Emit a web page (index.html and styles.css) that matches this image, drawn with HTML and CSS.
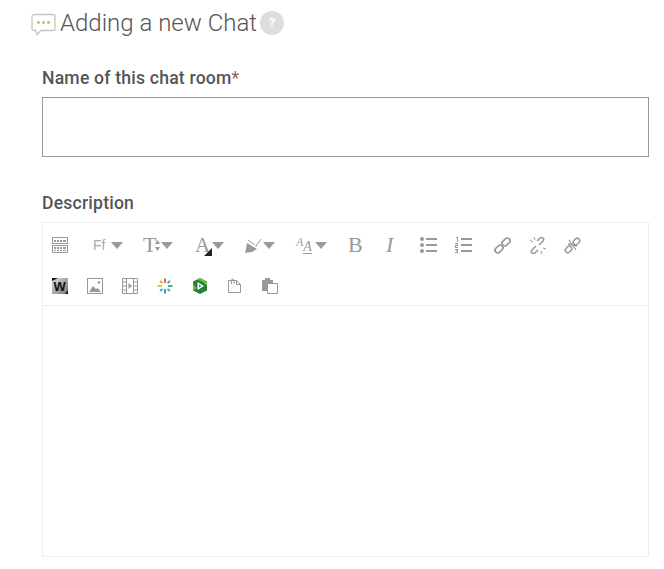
FILE: index.html
```html
<!DOCTYPE html>
<html lang="en">
<head>
<meta charset="utf-8">
<title>Adding a new Chat</title>
<link rel="stylesheet" href="styles.css">
</head>
<body>
<h2 class="heading">
  <svg class="chat-icon" width="26" height="24" viewBox="0 0 26 24"><path d="M4 2.500h19a2 2 0 0 1 2 2v12a2 2 0 0 1-2 2H11l-4 4-1.500-4H4a2 2 0 0 1-2-2v-12a2 2 0 0 1 2-2z" fill="#fff" stroke="#c4c4c4" stroke-width="1.300"/><circle cx="8.500" cy="10.500" r="1.300" fill="#8cc63f"/><circle cx="13.500" cy="10.500" r="1.300" fill="#8cc63f"/><circle cx="18.500" cy="10.500" r="1.300" fill="#8cc63f"/></svg>
  <span class="heading-text">Adding a new Chat</span>
  <span class="help">?</span>
</h2>
<form class="form">
  <label class="label label-name">Name of this chat room<span class="req">*</span></label>
  <input class="name-input" type="text">
  <label class="label label-desc">Description</label>
  <div class="editor">
    <div class="toolbar">
      <div class="row">
        <span class="tool t-first"><svg width="17" height="16" viewBox="0 0 17 16"><g fill="none" stroke="#999"><rect x=".5" y=".5" width="15" height="6"/><rect x=".5" y="8.500" width="15" height="7"/></g><path d="M2 3h2v2H2zM5 3h2v2H5zM8 3h2v2H8zM11 3h3v2h-3zM2 10h2v2H2zM5 10h2v2H5zM8 10h2v2H8zM11 10h3v2h-3zM2 13h2v1H2zM5 13h2v1H5zM8 13h2v1H8zM11 13h3v1h-3z" fill="#999"/></svg></span>
        <span class="tool t-font"><span class="ff">Ff</span><i class="caret"></i></span>
        <span class="tool t-size"><span class="tt">T</span><svg width="5" height="11" viewBox="0 0 5 11"><path d="M2.500 0l2.500 4H0zM2.500 11L0 7h5z" fill="#999"/></svg><i class="caret"></i></span>
        <span class="tool t-color"><span class="ca">A<svg class="corner" width="8" height="8" viewBox="0 0 8 8"><path d="M8 0v8H0z" fill="#222"/></svg></span><i class="caret"></i></span>
        <span class="tool t-hl"><svg width="17" height="17" viewBox="0 0 17 17"><path d="M2 6l10 6-5 3-7 1 1-4z" fill="#999"/><path d="M3 3l7 5M10.500 10L16 2" stroke="#999" fill="none"/></svg><i class="caret"></i></span>
        <span class="tool t-aa"><span class="aa"><span class="a1">A</span><span class="a2">A</span></span><i class="caret"></i></span>
        <span class="tool t-b">B</span>
        <span class="tool t-i">I</span>
        <span class="tool t-ul"><svg width="17" height="16" viewBox="0 0 17 16"><g fill="#999"><circle cx="2" cy="2" r="2"/><circle cx="2" cy="8" r="2"/><circle cx="2" cy="14" r="2"/><path d="M6 1h11v2H6zM6 7h11v2H6zM6 13h11v2H6z"/></g></svg></span>
        <span class="tool t-ol"><svg width="17" height="16" viewBox="0 0 17 16"><g fill="#999"><path d="M6 1h11v2H6zM6 7h11v2H6zM6 13h11v2H6zM1 0h2v5H2V1H1zM0 6h3v3H1v1h2v1H0V8h2V7H0zM0 12h3v4H0v-1h2v-1H1v-1h1v-0H0z"/></g></svg></span>
        <span class="tool t-link"><svg width="17" height="17" viewBox="0 0 17 17"><g fill="none" stroke="#999" stroke-width="1.700"><rect x="-4.500" y="-2.700" width="9" height="5.400" rx="2.700" transform="translate(5 12) rotate(-45)"/><rect x="-4.500" y="-2.700" width="9" height="5.400" rx="2.700" transform="translate(12 5) rotate(-45)"/></g></svg></span>
        <span class="tool t-unlink"><svg width="17" height="17" viewBox="0 0 17 17"><g fill="none" stroke="#999" stroke-width="1.600"><path d="M7 9l-4 4a2 2 0 0 0 3 3l3-3"/><path d="M10 8l4-4a2 2 0 0 0-3-3l-3 3"/></g><path d="M1 3l3 2M5 0l1 3M12 14l1 3M14 11l3 1" stroke="#999" fill="none"/></svg></span>
        <span class="tool t-unlink2"><svg width="17" height="17" viewBox="0 0 17 17"><g fill="none" stroke="#999" stroke-width="1.500"><rect x="-3.500" y="-2.500" width="7" height="5" rx="2.500" transform="translate(4.500 12.500) rotate(-45)"/><rect x="-3.500" y="-2.500" width="7" height="5" rx="2.500" transform="translate(12.500 4.500) rotate(-45)"/></g><path d="M5 3l7 10M13 9L4 7" stroke="#999" stroke-width="1.300" fill="none"/></svg></span>
      </div>
      <div class="row row-2">
        <span class="tool2"><svg width="16" height="16" viewBox="0 0 16 16"><defs><linearGradient id="w" x1="0" y1="0" x2="1" y2="1"><stop offset="0" stop-color="#ddd"/><stop offset="1" stop-color="#777"/></linearGradient></defs><rect width="16" height="16" fill="url(#w)"/><path d="M0 0h6L0 3zM16 16h-3l3-4z" fill="#111"/><text x="1.500" y="13" class="wtxt">W</text></svg></span>
        <span class="tool2"><svg width="16" height="16" viewBox="0 0 16 16"><rect x=".5" y=".5" width="15" height="15" fill="none" stroke="#999"/><path d="M2 14l4-6 3 3 2-1 3 4z" fill="#999"/><circle cx="12" cy="4.500" r="1.300" fill="#999"/></svg></span>
        <span class="tool2"><svg width="16" height="16" viewBox="0 0 16 16"><path d="M.5.500h15v15H.5zM4.500.500v15M11.500.500v15M.5 4h4M.5 8h4M.5 12h4M11.500 4h4M11.500 8h4M11.500 12h4" fill="none" stroke="#999"/><path d="M6.500 5l3.500 3-3.500 3z" fill="#999"/></svg></span>
        <span class="tool2"><svg width="16" height="16" viewBox="0 0 16 16" stroke-width="1.800" fill="none"><path d="M8 .500v4.500" stroke="#d9534f"/><path d="M8 11v4.500" stroke="#3b7fc4"/><path d="M.5 8h4.500" stroke="#d7c13a"/><path d="M11 8h4.500" stroke="#35a56b"/><path d="M3 3l2.500 2" stroke="#e0a030"/><path d="M13 3l-2.500 2" stroke="#35a56b"/><path d="M3 13l2.500-2" stroke="#3aa7d9"/><path d="M13 13l-2.500-2" stroke="#3aa7d9"/></svg></span>
        <span class="tool2"><svg width="16" height="16" viewBox="0 0 16 16"><path d="M8 0l7 3.500v9L8 16l-7-3.500v-9z" fill="#2a7f38"/><path d="M5 1.500L8 0l7 3.500V8L11 4zM1 12.500V6l3.500 4z" fill="#7ab648"/><path d="M5.500 4l6.500 4-6.500 4z" fill="#fff"/><path d="M7 6.500l2.500 1.500L7 9.500z" fill="#2a7f38"/></svg></span>
        <span class="tool2"><svg width="16" height="16" viewBox="0 0 16 16"><path d="M1.500 2.500h8l4 4v8h-12zM9.500 2.500v4h4" fill="#fff" stroke="#999"/><path d="M4.500 6V2a1.300 1.300 0 0 1 2.500 0v4" fill="none" stroke="#999"/></svg></span>
        <span class="tool2"><svg width="16" height="16" viewBox="0 0 16 16"><path d="M0 2h3V0h5v2h3v11H0z" fill="#999"/><path d="M5.500 5.500h10v10h-10z" fill="#fff" stroke="#999"/></svg></span>
      </div>
    </div>
    <div class="area"></div>
  </div>
</form>
</body>
</html>
```
FILE: styles.css
```css
* { box-sizing: border-box; }
html, body { margin: 0; background: #fff; }
body {
  width: 664px;
  height: 569px;
  overflow: hidden;
  font-family: Roboto, "Liberation Sans", sans-serif;
  color: #555;
}
.heading {
  display: flex;
  align-items: center;
  margin: 0;
  padding: 10px 0 0 30px;
  height: 36px;
  font-size: 24px;
  font-weight: 300;
  color: #555;
  line-height: 28px;
}
.chat-icon { flex: none; margin-top: 2px; }
.heading-text { margin-left: 4px; margin-right: -1px; }
.help {
  width: 24px;
  height: 24px;
  margin-left: 4px;
  border-radius: 50%;
  background: #ddd;
  color: #fff;
  font-size: 13px;
  font-weight: 700;
  line-height: 24px;
  text-align: center;
}
.form { padding: 0 15px 0 42px; }
.label {
  display: block;
  font-size: 17.6px;
  font-weight: 500;
  line-height: 20px;
  letter-spacing: .2px;
  color: #555;
}
.label-name { margin-top: 32px; }
.req { color: #a55; font-weight: 400; }
.name-input {
  display: block;
  width: 607px;
  height: 60px;
  margin-top: 9px;
  border: 1px solid #999;
  background: #fff;
}
.label-desc { margin-top: 36px; }
.editor {
  width: 607px;
  height: 335px;
  margin-top: 9px;
  border: 1px solid #eee;
  display: flex;
  flex-direction: column;
}
.toolbar { height: 83px; border-bottom: 1px solid #eee; padding-left: 9px; }
.row { display: flex; align-items: center; height: 24px; margin-top: 10px; color: #999; }
.row-2 { margin-top: 13px; height: 32px; gap: 19px; }
.tool, .tool2 { display: flex; align-items: center; flex: none; }
.tool2 svg, .tool svg { display: block; }
.t-font { margin-left: 24px; }
.ff { font-family: "Liberation Sans", sans-serif; font-size: 14px; width: 16px; color: #aaa; }
.caret {
  display: block;
  width: 0;
  height: 0;
  margin-left: 2px;
  border-left: 6px solid transparent;
  border-right: 6px solid transparent;
  border-top: 7px solid #999;
}
.t-size { margin-left: 20px; }
.t-size .caret { margin-left: 1px; }
.tt { font-family: "Liberation Serif", serif; font-size: 22px; line-height: 20px; width: 12px; }
.t-color { margin-left: 22px; }
.ca { position: relative; font-family: "Liberation Serif", serif; font-size: 21px; line-height: 20px; width: 15px; }
.corner { position: absolute; right: -2px; bottom: -1px; }
.t-hl { margin-left: 21px; }
.t-hl .caret { margin-left: 1px; }
.t-aa { margin-left: 21px; }
.aa { display: flex; align-items: flex-end; width: 17px; height: 18px; font-family: "Liberation Serif", serif; font-style: italic; line-height: 12px; }
.a1 { font-size: 12px; align-self: flex-start; }
.a2 { font-size: 14px; border-bottom: 1px solid #999; }
.t-b { margin-left: 21px; font-family: "Liberation Serif", serif; font-size: 22px; width: 15px; }
.t-i { margin-left: 23px; font-family: "Liberation Serif", serif; font-style: italic; font-size: 22px; width: 12px; }
.t-ul { margin-left: 22px; }
.t-ol { margin-left: 18px; }
.t-link { margin-left: 22px; }
.t-unlink { margin-left: 18px; }
.t-unlink2 { margin-left: 18px; }
.wtxt { font: 700 13px "Liberation Sans", sans-serif; fill: #111; }
.area { flex: 1; }
```
